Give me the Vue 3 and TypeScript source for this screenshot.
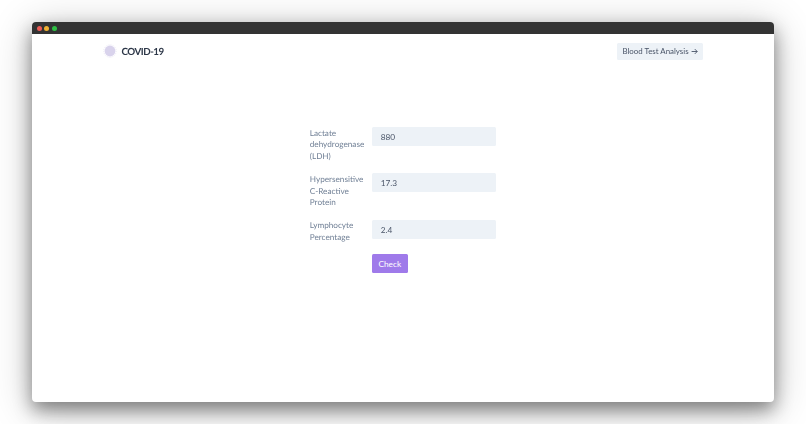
<script setup lang="ts">
const fields = [
  { label: 'Lactate dehydrogenase (LDH)', value: '880' },
  { label: 'Hypersensitive C-Reactive Protein', value: '17.3' },
  { label: 'Lymphocyte Percentage', value: '2.4' },
]
</script>

<template>
  <div class="page">
    <div class="window">
      <div class="titlebar">
        <span class="dot red"></span>
        <span class="dot yellow"></span>
        <span class="dot green"></span>
      </div>
      <div class="content">
        <header class="header">
          <div class="brand">
            <svg class="logo" width="14" height="14" viewBox="0 0 14 14">
              <circle cx="7" cy="7" r="5.4" fill="#d9d3ec" />
              <circle cx="7" cy="7" r="6.2" fill="none" stroke="#e8e5f3" stroke-width="0.9" stroke-dasharray="1 1" />
            </svg>
            <span class="title">COVID-19</span>
          </div>
          <button class="nav-btn">
            <span>Blood Test Analysis</span>
            <svg class="arrow" width="7" height="7" viewBox="0 0 7 7">
              <path d="M0.6 3.5H6.2M3.8 1.1L6.2 3.5L3.8 5.9" fill="none" stroke="#4a5568" stroke-width="0.9" />
            </svg>
          </button>
        </header>
        <form class="form" @submit.prevent>
          <div v-for="f in fields" :key="f.label" class="row">
            <label class="label">{{ f.label }}</label>
            <input class="input" :value="f.value" />
          </div>
          <div class="row actions">
            <span class="label"></span>
            <button class="check" type="submit">Check</button>
          </div>
        </form>
      </div>
    </div>
  </div>
</template>

<style>
html, body { margin: 0; background: #fff; }
</style>

<style scoped>
.page {
  width: 806px;
  height: 424px;
  box-sizing: border-box;
  padding: 22px 32px 22px 31.5px;
  background: #fff;
  overflow: hidden;
  font-family: Lato, sans-serif;
  text-rendering: geometricPrecision;
}
.window {
  height: 100%;
  border-radius: 4px;
  overflow: hidden;
  background: #fff;
  box-shadow: 0 8px 18px rgba(0, 0, 0, 0.42), 0 6px 42px rgba(0, 0, 0, 0.24);
  display: flex;
  flex-direction: column;
}
.titlebar {
  height: 12.3px;
  background: #333333;
  display: flex;
  align-items: center;
  gap: 2.7px;
  padding-left: 5.3px;
  flex: none;
}
.dot { width: 5px; height: 5px; border-radius: 50%; }
.red { background: #ed5b55; }
.yellow { background: #f0b232; }
.green { background: #2fc145; }
.content { flex: 1; filter: blur(0.3px); }
.header {
  display: flex;
  justify-content: space-between;
  align-items: center;
  padding: 8.7px 71px 0 71.5px;
}
.brand { display: flex; align-items: center; gap: 4.5px; }
.logo { display: block; }
.title {
  font-size: 9.8px;
  font-weight: 700;
  letter-spacing: -0.5px;
  line-height: 14px;
  padding-top: 1px;
  color: #2d3748;
}
.nav-btn {
  height: 17px;
  width: 86px;
  padding: 0;
  border: 0;
  border-radius: 1.5px;
  background: #edf2f7;
  color: #4a5568;
  font: 400 7.9px Lato, sans-serif;
  display: flex;
  align-items: center;
  justify-content: center;
  gap: 2px;
}
.arrow { display: block; }
.form {
  width: 186px;
  margin: 67px auto 0;
}
.row { display: flex; align-items: flex-start; margin-bottom: 11.55px; }
.label {
  width: 62px;
  flex: none;
  box-sizing: border-box;
  margin: 0.7px 0 -0.7px;
  padding-right: 6px;
  font-size: 8.2px;
  line-height: 11.6px;
  color: #718096;
}
.input {
  width: 124px;
  height: 19px;
  box-sizing: border-box;
  padding: 1px 8.5px 0 9px;
  border: 0;
  border-radius: 1.5px;
  background: #edf2f7;
  color: #4a5568;
  font: 8.3px Lato, sans-serif;
  outline: none;
}
.check {
  width: 36px;
  height: 19px;
  padding: 0;
  border: 0;
  border-radius: 1.5px;
  background: #9f7aea;
  color: #fff;
  font: 400 8.3px Lato, sans-serif;
}
</style>
